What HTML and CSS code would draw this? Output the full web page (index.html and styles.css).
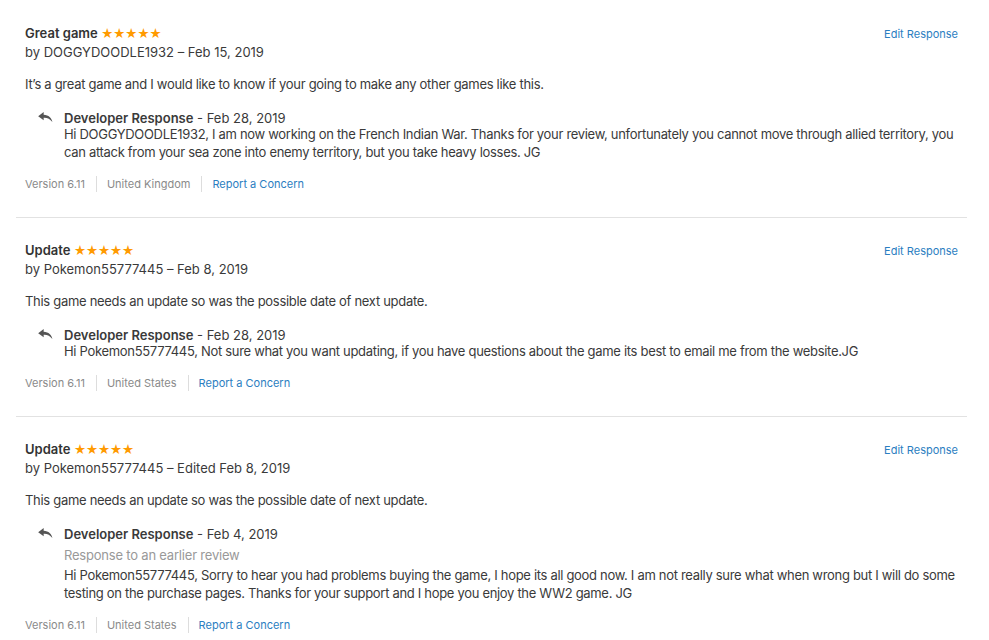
FILE: index.html
```html
<!DOCTYPE html>
<html>
<head>
<meta charset="utf-8">
<link rel="stylesheet" href="styles.css">
</head>
<body>
<div class="reviews">
  <div class="review">
    <div class="head">
      <div>
        <div class="title">Great game <span class="stars">★★★★★</span></div>
        <div class="byline">by DOGGYDOODLE1932 – Feb 15, 2019</div>
      </div>
      <a class="edit">Edit Response</a>
    </div>
    <p class="body">It’s a great game and I would like to know if your going to make any other games like this.</p>
    <div class="response">
      <svg class="reply" viewBox="0 0 16 12" width="15" height="11"><path d="M6 0 L0 4.5 L6 9 L6 6.2 C10 6 13 7.5 15.5 11 C14.8 6.5 11.5 3.3 6 3 Z" fill="#555"/></svg>
      <div class="rtext">
        <div class="rhead"><b>Developer Response</b> - Feb 28, 2019</div>
        <div class="rbody">Hi DOGGYDOODLE1932, I am now working on the French Indian War. Thanks for your review, unfortunately you cannot move through allied territory, you can attack from your sea zone into enemy territory, but you take heavy losses. JG</div>
      </div>
    </div>
    <div class="foot"><span>Version 6.11</span><span>United Kingdom</span><a>Report a Concern</a></div>
  </div>
  <div class="review">
    <div class="head">
      <div>
        <div class="title">Update <span class="stars">★★★★★</span></div>
        <div class="byline">by Pokemon55777445 – Feb 8, 2019</div>
      </div>
      <a class="edit">Edit Response</a>
    </div>
    <p class="body">This game needs an update so was the possible date of next update.</p>
    <div class="response">
      <svg class="reply" viewBox="0 0 16 12" width="15" height="11"><path d="M6 0 L0 4.5 L6 9 L6 6.2 C10 6 13 7.5 15.5 11 C14.8 6.5 11.5 3.3 6 3 Z" fill="#555"/></svg>
      <div class="rtext">
        <div class="rhead"><b>Developer Response</b> - Feb 28, 2019</div>
        <div class="rbody">Hi Pokemon55777445, Not sure what you want updating, if you have questions about the game its best to email me from the website.JG</div>
      </div>
    </div>
    <div class="foot"><span>Version 6.11</span><span>United States</span><a>Report a Concern</a></div>
  </div>
  <div class="review">
    <div class="head">
      <div>
        <div class="title">Update <span class="stars">★★★★★</span></div>
        <div class="byline">by Pokemon55777445 – Edited Feb 8, 2019</div>
      </div>
      <a class="edit">Edit Response</a>
    </div>
    <p class="body">This game needs an update so was the possible date of next update.</p>
    <div class="response">
      <svg class="reply" viewBox="0 0 16 12" width="15" height="11"><path d="M6 0 L0 4.5 L6 9 L6 6.2 C10 6 13 7.5 15.5 11 C14.8 6.5 11.5 3.3 6 3 Z" fill="#555"/></svg>
      <div class="rtext">
        <div class="rhead"><b>Developer Response</b> - Feb 4, 2019</div>
        <div class="earlier">Response to an earlier review</div>
        <div class="rbody">Hi Pokemon55777445, Sorry to hear you had problems buying the game, I hope its all good now. I am not really sure what when wrong but I will do some testing on the purchase pages. Thanks for your support and I hope you enjoy the WW2 game. JG</div>
      </div>
    </div>
    <div class="foot"><span>Version 6.11</span><span>United States</span><a>Report a Concern</a></div>
  </div>
</div>
</body>
</html>
```
FILE: styles.css
```css
html, body { margin: 0; padding: 0; background: #fff; }
body {
  font-family: Inter, "Noto Sans", sans-serif;
  font-size: 13px;
  color: #3a3a3a;
  line-height: 18px;
}
.reviews { margin: 0 22px 0 16px; padding-top: 24px; }
.review {
  padding: 0 9px 25px;
  border-bottom: 1px solid #e2e2e2;
  margin-bottom: 23px;
}
.head { display: flex; justify-content: space-between; align-items: flex-start; }
.title { font-weight: 600; color: #333; }
.stars { color: #ff9a00; font-size: 12px; letter-spacing: -0.5px; }
.byline { margin-top: 0; }
.edit { font-size: 11px; color: #2b7ec1; margin-top: 1px; }
.body { margin: 14px 0 17px; letter-spacing: -0.3px; }
.response { display: flex; padding-left: 13px; }
.reply { margin-top: 2px; width: 15px; flex: none; }
.rtext { margin-left: 11px; }
.rhead b { font-weight: 600; }
.rhead { line-height: 16px; margin-bottom: -1px; }
.rbody { letter-spacing: -0.31px; }
.earlier { color: #999; margin: 5px 0 2px; letter-spacing: -0.2px; }
.foot { display: flex; align-items: center; margin-top: 15px; font-size: 11px; line-height: 16px; color: #8a8a8a; }
.foot span { padding-right: 11px; margin-right: 10px; border-right: 1px solid #ddd; }
.foot a { color: #2b7ec1; }
```
